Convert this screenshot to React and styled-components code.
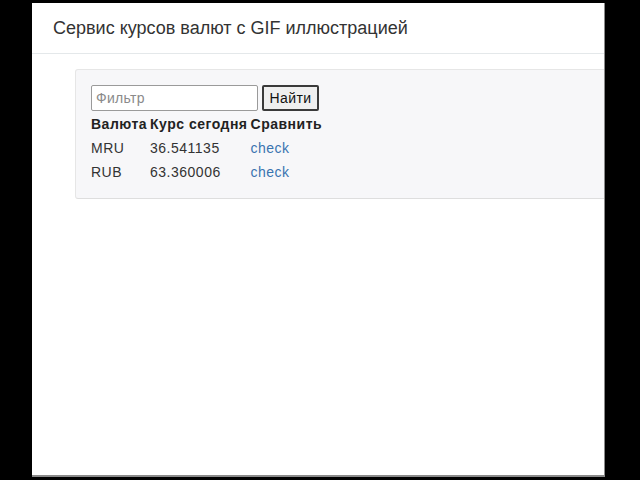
import React from "react";
import styled, { createGlobalStyle } from "styled-components";

const Global = createGlobalStyle`
  html, body { margin: 0; padding: 0; background: #000; }
  body { font-family: "Liberation Sans", Arial, Helvetica, sans-serif; color: #333; }
`;

const Page = styled.div`
  margin: 3px 0 0 32px;
  width: 573px;
  height: 474px;
  background: #fff;
  border-right: 1px solid #8a8a8a;
  border-bottom: 2px solid #8a8a8a;
  overflow: hidden;
  box-sizing: border-box;
`;

const Header = styled.header`
  height: 51px;
  display: flex;
  align-items: center;
  padding-left: 21px;
  border-bottom: 1px solid #e4e8ea;
  box-sizing: border-box;
  font-size: 18px;
  color: #333;
`;

const Content = styled.main`
  padding: 15px 0 0 43px;
`;

const Well = styled.section`
  width: 560px;
  background: #f7f7f9;
  border: 1px solid #e6e6e6;
  border-bottom-color: #dedede;
  border-radius: 3px 0 0 3px;
  padding: 15px 15px 13px;
  box-sizing: border-box;
  font-size: 14px;
  line-height: 20px;
`;

const Form = styled.form`
  display: flex;
  gap: 4px;
  align-items: stretch;
`;

const Input = styled.input`
  width: 167px;
  height: 26px;
  box-sizing: border-box;
  border: 1px solid #9a9a9a;
  border-radius: 2px;
  padding: 0 4px;
  font: 14px "Liberation Sans", Arial, sans-serif;
  letter-spacing: 0.3px;
  color: #333;
  background: #fff;
  &::placeholder { color: #8a8a8a; }
`;

const Button = styled.button`
  height: 26px;
  width: 57px;
  box-sizing: border-box;
  border: 2px solid #3a3a3a;
  border-radius: 2px;
  background: #efefef;
  font: 14px "Liberation Sans", Arial, sans-serif;
  letter-spacing: 0.4px;
  color: #111;
  padding: 0;
`;

const Table = styled.table`
  border-spacing: 2px;
  margin-left: -3px;
  font-size: 14px;
  line-height: 20px;
  letter-spacing: 0.5px;
`;

const Th = styled.th`
  padding: 1px 0 1px 1px;
  text-align: left;
  font-weight: bold;
  color: #222;
`;

const Td = styled.td`
  padding: 1px 0 1px 1px;
  color: #333;
`;

const Link = styled.a`
  color: #3a74b0;
  text-decoration: none;
`;

const rows = [
  { code: "MRU", rate: "36.541135" },
  { code: "RUB", rate: "63.360006" },
];

export default function App() {
  return (
    <>
      <Global />
      <Page>
        <Header>Сервис курсов валют с GIF иллюстрацией</Header>
        <Content>
          <Well>
            <Form onSubmit={(e) => e.preventDefault()}>
              <Input placeholder="Фильтр" />
              <Button type="submit">Найти</Button>
            </Form>
            <Table>
              <thead>
                <tr>
                  <Th>Валюта</Th>
                  <Th>Курс сегодня</Th>
                  <Th>Сравнить</Th>
                </tr>
              </thead>
              <tbody>
                {rows.map((r) => (
                  <tr key={r.code}>
                    <Td>{r.code}</Td>
                    <Td>{r.rate}</Td>
                    <Td>
                      <Link href="#">check</Link>
                    </Td>
                  </tr>
                ))}
              </tbody>
            </Table>
          </Well>
        </Content>
      </Page>
    </>
  );
}
